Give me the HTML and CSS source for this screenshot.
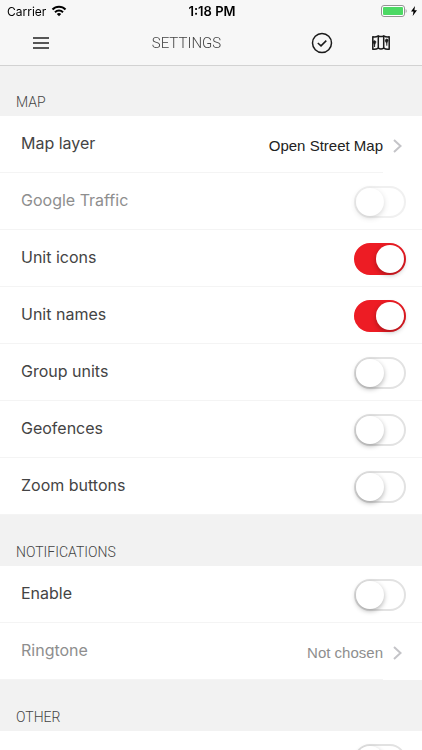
FILE: index.html
```html
<!DOCTYPE html>
<html lang="en">
<head>
<meta charset="UTF-8">
<meta name="viewport" content="width=device-width, initial-scale=1">
<title>Settings</title>
<link rel="stylesheet" href="styles.css">
</head>
<body>

<!-- Top bar -->
<header class="top">
    <div class="status-bar">
        <div class="status-left">
            <span>Carrier</span>
            <svg class="wifi" width="16" height="12" viewBox="0 0 16 12" fill="none" stroke="#000" stroke-width="2" aria-hidden="true">
                <path d="M1.500 4.500C5 .8 11 .8 14.500 4.500"/>
                <path d="M4 7.200c2.300-2.300 5.700-2.300 8 0"/>
                <path d="M5.800 8.900c1.300-1.200 3.100-1.200 4.400 0L8 11.200z" fill="#000" stroke="none"/>
            </svg>
        </div>
        <div class="status-time">1:18 PM</div>
        <div class="status-right">
            <svg width="26" height="12" viewBox="0 0 26 12" aria-hidden="true">
                <rect x=".5" y=".5" width="23" height="11" rx="2.500" fill="#fff" stroke="#949494"/>
                <rect x="2" y="2" width="20" height="8" rx="1" fill="#4cd964"/>
                <path d="M24.700 4v4c1.200-.5 1.200-3.500 0-4z" fill="#949494"/>
            </svg>
            <svg width="6" height="10" viewBox="0 0 6 10" aria-hidden="true">
                <path d="M4 0L0 5.600h2.500L1.700 10 6 4.200H3.400z" fill="#000"/>
            </svg>
        </div>
    </div>
    <div class="app-bar">
        <button class="icon-btn menu-btn" type="button" aria-label="Menu">
            <svg width="16" height="14" viewBox="0 0 16 14" stroke="#222" stroke-width="1.600" aria-hidden="true">
                <path d="M0 2h16M0 7h16M0 12h16"/>
            </svg>
        </button>
        <h1>SETTINGS</h1>
        <button class="icon-btn" type="button" aria-label="Done">
            <svg width="22" height="22" viewBox="0 0 22 22" fill="none" stroke="#1a1a1a" stroke-width="1.500" aria-hidden="true">
                <circle cx="11" cy="11" r="9.500"/>
                <path d="M6.800 11l3.200 2.900 5.300-5.300"/>
            </svg>
        </button>
        <button class="icon-btn" type="button" aria-label="Map">
            <svg width="18" height="16" viewBox="0 0 18 16" fill="none" stroke="#1a1a1a" stroke-width="1.500" stroke-linejoin="round" aria-hidden="true">
                <path d="M.8 1.800c2 .4 3.900 0 5.500-1 1.800 1 3.600 1 5.400 0 1.600 1 3.500 1.400 5.500 1v12.400c-2 .4-3.900 0-5.500-1-1.800 1-3.600 1-5.400 0-1.600 1-3.500 1.400-5.500 1z"/>
                <path d="M6.300 1v12.200M11.700 1v12.200"/>
                <path d="M1.200 6.400c.6-1 2.400-1 2.600.4.100 1-.8 1.600-1.200 3.200C2.200 8.600 1.200 8 1.200 6.400zM13.400 4.900c.5-1.200 2.500-1.100 2.700.3.100 1.200-1 1.700-1.300 3.500-.4-1.500-1.700-2.200-1.400-3.800z" fill="#1a1a1a" stroke-width=".8"/>
                <path d="M2.600 10v2M14.800 8.700v2" stroke-width="1"/>
            </svg>
        </button>
    </div>
</header>

<main>
    <!-- Map -->
    <section>
        <h2>MAP</h2>
        <button class="row link-row" type="button">
            <span class="row-body">
                <span class="label">Map layer</span>
                <span class="value">Open Street Map</span>
            </span>
            <svg class="chevron" width="9" height="14" viewBox="0 0 9 14" aria-hidden="true"><path d="M1 1l6.500 6L1 13"/></svg>
        </button>
        <div class="row disabled">
            <label class="label" for="traffic">Google Traffic</label>
            <input class="toggle" type="checkbox" id="traffic" disabled>
        </div>
        <div class="row">
            <label class="label" for="icons">Unit icons</label>
            <input class="toggle" type="checkbox" id="icons" checked>
        </div>
        <div class="row">
            <label class="label" for="names">Unit names</label>
            <input class="toggle" type="checkbox" id="names" checked>
        </div>
        <div class="row">
            <label class="label" for="group">Group units</label>
            <input class="toggle" type="checkbox" id="group">
        </div>
        <div class="row">
            <label class="label" for="geofences">Geofences</label>
            <input class="toggle" type="checkbox" id="geofences">
        </div>
        <div class="row">
            <label class="label" for="zoom">Zoom buttons</label>
            <input class="toggle" type="checkbox" id="zoom">
        </div>
    </section>

    <!-- Notifications -->
    <section>
        <h2>NOTIFICATIONS</h2>
        <div class="row">
            <label class="label" for="enable">Enable</label>
            <input class="toggle" type="checkbox" id="enable">
        </div>
        <button class="row link-row disabled" type="button">
            <span class="row-body">
                <span class="label">Ringtone</span>
                <span class="value">Not chosen</span>
            </span>
            <svg class="chevron" width="9" height="14" viewBox="0 0 9 14" aria-hidden="true"><path d="M1 1l6.500 6L1 13"/></svg>
        </button>
    </section>

    <!-- Other -->
    <section>
        <h2>OTHER</h2>
        <div class="row">
            <input class="toggle" type="checkbox" aria-label="Other option">
        </div>
    </section>
</main>

</body>
</html>
```

FILE: styles.css
```css
* {
    box-sizing: border-box;
}
body {
    margin: 0;
    height: 100vh;
    display: flex;
    flex-direction: column;
    font-family: Inter, "Liberation Sans", sans-serif;
    background: #f2f2f2;
    color: #444;
}
button {
    border: none;
    padding: 0;
    background: none;
    font: inherit;
    color: inherit;
    cursor: pointer;
}

/* top bar */
.top {
    position: relative;
    z-index: 1;
    flex: none;
    background: #f7f7f7;
    box-shadow: 0 1px 0 #d2d2d2;
}
.status-bar {
    display: grid;
    grid-template-columns: 1fr auto 1fr;
    align-items: center;
    height: 22px;
    padding: 0 5px 0 7px;
    font-size: 12px;
    color: #000;
}
.status-left {
    display: flex;
    align-items: center;
    gap: 5px;
}
.status-time {
    font-size: 13px;
    font-weight: 600;
}
.status-right {
    display: flex;
    align-items: center;
    justify-content: flex-end;
    gap: 4px;
}
.app-bar {
    display: flex;
    height: 43px;
    padding: 0 12px 1px 0;
}
.app-bar h1 {
    flex: 1;
    margin: 0;
    font-family: Roboto, "Liberation Sans", sans-serif;
    font-size: 15px;
    font-weight: 300;
    line-height: 43px;
    text-align: center;
}
.icon-btn {
    display: flex;
    align-items: center;
    justify-content: center;
    width: 59px;
}
.menu-btn {
    width: 81px;
}

/* settings list */
main {
    flex: 1;
    min-height: 0;
    overflow-y: auto;
    scrollbar-width: none;
}
h2 {
    margin: 0;
    padding: 27px 16px 4px;
    font-family: Roboto, "Liberation Sans", sans-serif;
    font-size: 14px;
    font-weight: 300;
    line-height: 20px;
    background: #f2f2f2;
}
.row {
    display: flex;
    align-items: center;
    justify-content: flex-end;
    width: 100%;
    height: 57px;
    padding: 0 16px 0 21px;
    border-bottom: 1px solid #f4f4f4;
    background: #fff;
}
.label {
    flex: 1;
    padding-bottom: 3px;
    font-size: 16px;
    text-align: left;
}
.link-row {
    padding-left: 0;
    border-bottom: none;
}
.row-body {
    flex: 1;
    display: flex;
    align-items: center;
    height: 100%;
    padding-left: 21px;
    border-bottom: 1px solid #f4f4f4;
}
.value {
    padding-top: 3px;
    font-family: "Liberation Sans", Arial, sans-serif;
    font-size: 15px;
    color: #222;
}
.chevron {
    margin: 2px 4px 0 10px;
    fill: none;
    stroke: #c4c4c8;
    stroke-width: 2;
}
.disabled .label,
.disabled .value {
    color: #8e8e8e;
}

/* switch */
.toggle {
    appearance: none;
    display: flex;
    align-items: center;
    width: 52px;
    height: 32px;
    margin: 2px 0 0;
    padding: 0;
    border: 2px solid #e2e2e2;
    border-radius: 16px;
    background: #fff;
    cursor: pointer;
}
.toggle::before {
    content: "";
    width: 28px;
    height: 28px;
    border-radius: 50%;
    background: #fff;
    box-shadow: 0 2px 5px rgba(0, 0, 0, 0.3);
}
.toggle:checked {
    justify-content: flex-end;
    border-color: #ed1c24;
    background: #ed1c24;
}
.toggle:disabled {
    opacity: 0.5;
}
```
